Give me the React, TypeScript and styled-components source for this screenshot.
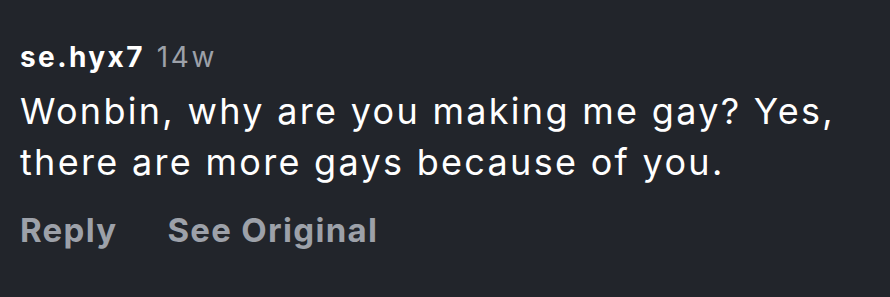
import styled, { createGlobalStyle } from "styled-components";

const GlobalStyle = createGlobalStyle`
  html, body {
    margin: 0;
    padding: 0;
    background-color: #22252b;
  }
`;

const Comment = styled.div`
  width: 890px;
  height: 297px;
  box-sizing: border-box;
  padding: 37px 20px 0 20px;
  background-color: #22252b;
  font-family: Inter, "Liberation Sans", sans-serif;
  display: flex;
  flex-direction: column;
`;

const Header = styled.div`
  display: flex;
  align-items: baseline;
  gap: 12px;
  line-height: 40px;
`;

const Username = styled.span`
  color: #ffffff;
  font-size: 28px;
  font-weight: 700;
  letter-spacing: 2.4px;
`;

const Time = styled.span`
  color: #9da1a9;
  font-size: 28px;
  font-weight: 400;
  letter-spacing: 2.6px;
`;

const Body = styled.p`
  margin: 9px 0 0 0;
  color: #ffffff;
  font-size: 36px;
  line-height: 51px;
  letter-spacing: 2.3px;
  max-width: 850px;
`;

const Actions = styled.div`
  display: flex;
  gap: 50px;
  margin-top: 22px;
`;

const Action = styled.span`
  color: #9da1a9;
  font-size: 33px;
  font-weight: 700;
  letter-spacing: 1.3px;
`;

export default function App() {
  return (
    <>
      <GlobalStyle />
      <Comment>
        <Header>
          <Username>se.hyx7</Username>
          <Time>14w</Time>
        </Header>
        <Body>
          Wonbin, why are you making me gay? Yes, there are more gays because
          of you.
        </Body>
        <Actions>
          <Action>Reply</Action>
          <Action>See Original</Action>
        </Actions>
      </Comment>
    </>
  );
}
